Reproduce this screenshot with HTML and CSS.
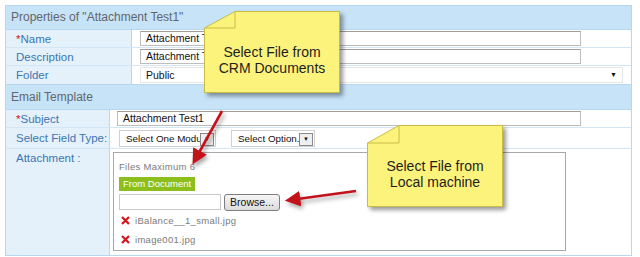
FILE: index.html
```html
<!DOCTYPE html>
<html lang="en">

<head>
    <meta charset="UTF-8">
    <meta name="viewport" content="width=device-width, initial-scale=1.0">
    <title>Attachment Properties</title>
    <link rel="stylesheet" href="styles.css">
</head>

<body>
    <div class="panel">
        <div class="sectionHead">Properties of "Attachment Test1"</div>
        <div class="row top">
            <div class="label"><span class="req">*</span>Name</div>
            <div class="value"><div class="field">Attachment Test1</div></div>
        </div>
        <div class="row top">
            <div class="label">Description</div>
            <div class="value"><div class="field">Attachment Test1</div></div>
        </div>
        <div class="row top folder">
            <div class="label">Folder</div>
            <div class="value"><div class="select wide">Public<span class="caret">&#9660;</span></div></div>
        </div>

        <div class="sectionHead second">Email Template</div>
        <div class="row low">
            <div class="label"><span class="req">*</span>Subject</div>
            <div class="value"><div class="field subject">Attachment Test1</div></div>
        </div>
        <div class="row low fieldType">
            <div class="label">Select Field Type:</div>
            <div class="value">
                <div class="select small"><span class="selText">Select One Modu</span><span class="btnCaret">&#9660;</span></div>
                <div class="select small opt"><span class="selText">Select Option.</span><span class="btnCaret">&#9660;</span></div>
            </div>
        </div>
        <div class="row low attach">
            <div class="label">Attachment :</div>
            <div class="value">
                <div class="attachBox">
                    <div class="hint">Files Maximum 6</div>
                    <div class="greenBtn">From Document</div>
                    <div class="fileRow">
                        <div class="fileInput"></div>
                        <div class="browse">Browse...</div>
                    </div>
                    <div class="fileItem">
                        <svg class="x" width="9" height="9" viewBox="0 0 9 9"><path d="M1 1L8 8M8 1L1 8" stroke="#d6161d" stroke-width="2.2"/></svg>
                        iBalance__1_small.jpg
                    </div>
                    <div class="fileItem">
                        <svg class="x" width="9" height="9" viewBox="0 0 9 9"><path d="M1 1L8 8M8 1L1 8" stroke="#d6161d" stroke-width="2.2"/></svg>
                        image001.jpg
                    </div>
                </div>
            </div>
        </div>
    </div>

    <!-- callouts over the form -->
    <svg class="arrows" width="640" height="257" viewBox="0 0 640 257">
        <defs>
            <marker id="head" markerWidth="6" markerHeight="6" refX="4" refY="3" orient="auto" markerUnits="strokeWidth">
                <path d="M0 0L6 3L0 6z" fill="#c4121b"/>
            </marker>
        </defs>
        <line x1="222" y1="111" x2="195" y2="160" stroke="#c4121b" stroke-width="2.6" marker-end="url(#head)"/>
        <line x1="356" y1="191" x2="290" y2="200" stroke="#c4121b" stroke-width="2.6" marker-end="url(#head)"/>
    </svg>

    <div class="note crm">
        <svg class="paper" width="136" height="82" viewBox="0 0 136 82">
            <polygon points="31,0.5 135.5,0.5 135.5,81.5 0.5,81.5 0.5,17" fill="#fcf37c" stroke="#c9bb45"/>
            <polyline points="31,0.5 31,17 0.5,17" fill="none" stroke="#c9bb45"/>
        </svg>
        <div class="noteText">Select File from<br>CRM Documents</div>
    </div>
    <div class="note local">
        <svg class="paper" width="136" height="82" viewBox="0 0 136 82">
            <polygon points="32,0.5 135.5,0.5 135.5,81.5 0.5,81.5 0.5,18" fill="#fcf37c" stroke="#c9bb45"/>
            <polyline points="32,0.5 32,18 0.5,18" fill="none" stroke="#c9bb45"/>
        </svg>
        <div class="noteText">Select File from<br>Local machine</div>
    </div>
</body>

</html>
```

FILE: styles.css
```css
body {
    margin: 0;
    background-color: white;
    font-family: "Liberation Sans", Arial, sans-serif;
    position: relative;
    width: 640px;
    height: 257px;
    overflow: hidden;
}
.panel {
    margin: 5px 0 0 5px;
    width: 625px;
    border: 1px solid #b7d6ef;
}
.sectionHead {
    height: 23px;
    line-height: 23px;
    padding-left: 5px;
    background-color: #c7e3f8;
    color: #62666b;
    font-size: 12px;
    border-bottom: 1px solid #b7d6ef;
}
.sectionHead.second {
    height: 24px;
    line-height: 24px;
}
.row {
    display: grid;
    border-bottom: 1px solid #d3e6f5;
    height: 17px;
}
.row.top {
    grid-template-columns: 126px 1fr;
}
.row.low {
    grid-template-columns: 104px 1fr;
}
.row.folder {
    height: 18px;
    border-bottom-color: #b7d6ef;
}
.row.fieldType {
    height: 20px;
}
.row.attach {
    height: 106px;
    border-bottom: 0;
}
.label {
    background-color: #e4f0fa;
    border-right: 1px solid #b7d6ef;
    color: #3b77b3;
    font-size: 11.5px;
    padding-left: 10px;
    display: flex;
    align-items: center;
}
.attach .label {
    align-items: flex-start;
    padding-top: 3px;
}
.req {
    color: #d6161d;
}
.value {
    display: flex;
    align-items: center;
    padding-left: 8px;
}
.low .value {
    padding-left: 7px;
}
.field {
    box-sizing: border-box;
    width: 441px;
    height: 15px;
    line-height: 13px;
    border: 1px solid #bdbdbd;
    border-top-color: #9c9c9c;
    padding-left: 5px;
    font-size: 10.5px;
    color: #111;
    white-space: nowrap;
    overflow: hidden;
}
.field.subject {
    width: 464px;
}
.select {
    position: relative;
    box-sizing: border-box;
    height: 16px;
    line-height: 14px;
    border: 1px solid #d0d0d0;
    padding-left: 5px;
    font-size: 10.5px;
    color: #111;
    white-space: nowrap;
    background-color: white;
}
.select.wide {
    width: 483px;
    border-color: #e6e6e6;
}
.caret {
    position: absolute;
    right: 5px;
    top: 0;
    font-size: 7px;
}
.select.small {
    width: 97px;
    height: 17px;
    line-height: 15px;
    margin-left: 2px;
    padding-left: 6px;
    padding-right: 14px;
    font-size: 9.8px;
}
.select.opt {
    width: 84px;
    margin-left: 15px;
}
.btnCaret {
    position: absolute;
    right: 1px;
    top: 2px;
    width: 12px;
    height: 11px;
    line-height: 11px;
    text-align: center;
    font-size: 6px;
    border: 1px solid #8a8a8a;
    background-color: #efefef;
}
.attach .value {
    align-items: flex-start;
    padding: 3px 0 0 3px;
}
.attachBox {
    box-sizing: border-box;
    width: 453px;
    height: 99px;
    border: 1px solid #a9a9a9;
    padding: 8px 5px 0 5px;
    font-size: 9.5px;
    color: #7a7a7a;
}
.hint {
    height: 12px;
    line-height: 12px;
    letter-spacing: 0.3px;
}
.greenBtn {
    display: inline-block;
    margin-top: 4px;
    height: 14px;
    line-height: 14px;
    padding: 0 4px;
    background-color: #8cbf1b;
    color: white;
    font-size: 9.5px;
}
.fileRow {
    display: flex;
    gap: 3px;
    margin-top: 3px;
    height: 16px;
}
.fileInput {
    width: 102px;
    height: 16px;
    box-sizing: border-box;
    border: 1px solid #c9c9c9;
    background-color: white;
}
.browse {
    box-sizing: border-box;
    width: 56px;
    height: 17px;
    line-height: 15px;
    text-align: center;
    border: 1px solid #7d7d7d;
    border-radius: 3px;
    background: linear-gradient(#f6f6f6, #dcdcdc);
    color: #111;
    font-size: 10.5px;
}
.fileItem {
    display: flex;
    align-items: center;
    gap: 5px;
    height: 18px;
    margin-top: 1px;
    padding-left: 2px;
    letter-spacing: 0.3px;
}
.arrows {
    position: absolute;
    left: 0;
    top: 0;
    pointer-events: none;
    filter: drop-shadow(2px 3px 2px rgba(0, 0, 0, 0.35));
}
.note {
    position: absolute;
    width: 136px;
    height: 82px;
}
.note.crm {
    left: 204px;
    top: 11px;
}
.note.local {
    left: 367px;
    top: 125px;
}
.paper {
    position: absolute;
    left: 0;
    top: 0;
    filter: drop-shadow(3px 3px 2px rgba(0, 0, 0, 0.4));
}
.noteText {
    position: relative;
    padding-top: 33px;
    text-align: center;
    font-size: 14px;
    line-height: 16px;
    color: #1e1e1e;
}
```
